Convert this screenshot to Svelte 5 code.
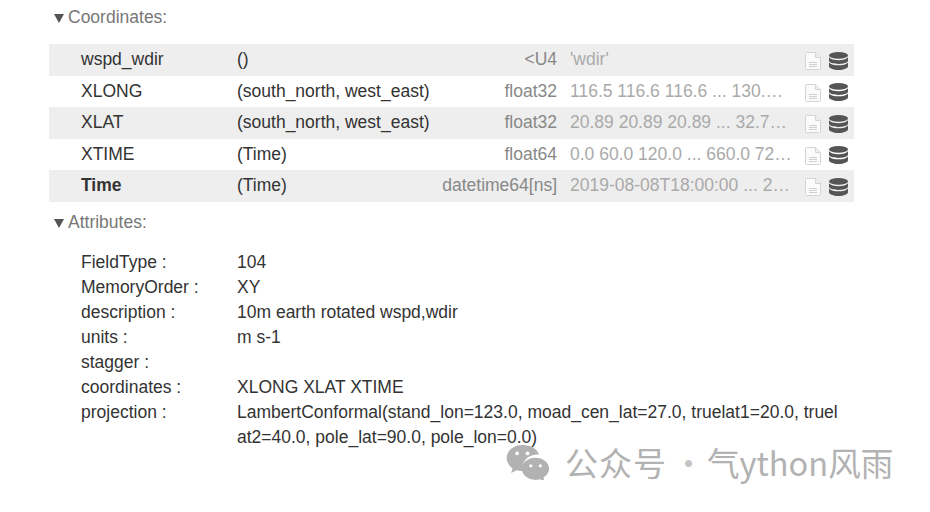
<script>
  const coords = [
    { name: 'wspd_wdir', dims: '()', dtype: '<U4', preview: "'wdir'" },
    { name: 'XLONG', dims: '(south_north, west_east)', dtype: 'float32', preview: '116.5 116.6 116.6 ... 130.6 130.6 130.7' },
    { name: 'XLAT', dims: '(south_north, west_east)', dtype: 'float32', preview: '20.89 20.89 20.89 ... 32.78 32.78 32.78' },
    { name: 'XTIME', dims: '(Time)', dtype: 'float64', preview: '0.0 60.0 120.0 ... 660.0 720.0 780.0' },
    { name: 'Time', dims: '(Time)', dtype: 'datetime64[ns]', preview: '2019-08-08T18:00:00 ... 2019-08-09', bold: true }
  ];

  const attrs = [
    ['FieldType :', '104'],
    ['MemoryOrder :', 'XY'],
    ['description :', '10m earth rotated wspd,wdir'],
    ['units :', 'm s-1'],
    ['stagger :', ''],
    ['coordinates :', 'XLONG XLAT XTIME'],
    ['projection :', 'LambertConformal(stand_lon=123.0, moad_cen_lat=27.0, truelat1=20.0, truelat2=40.0, pole_lat=90.0, pole_lon=0.0)']
  ];
</script>

<div class="page">
  <div class="section-title first"><span class="arrow"></span>Coordinates:</div>

  <ul class="vars">
    {#each coords as c}
      <li class="var">
        <div class="name" class:bold={c.bold}>{c.name}</div>
        <div class="dims">{c.dims}</div>
        <div class="dtype">{c.dtype}</div>
        <div class="preview">{c.preview}</div>
        <svg class="file" viewBox="0 0 16 18" width="16" height="18" aria-hidden="true">
          <path d="M1.500 .5h9l5 5v11a1 1 0 0 1-1 1h-13a1 1 0 0 1-1-1v-15a1 1 0 0 1 1-1z" fill="#fbfbfb" stroke="#d4d4d4" />
          <path d="M10.500 .5v5h5" fill="#eee" stroke="#d4d4d4" />
          <path d="M4 10.500h8M4 12.500h8M4 14.500h8" stroke="#d0d0d0" />
        </svg>
        <svg class="db" viewBox="0 0 19 18" width="19" height="18" aria-hidden="true">
          <ellipse cx="9.500" cy="3.400" rx="9.500" ry="3.400" fill="#555" />
          <path d="M0 5.300c1.500 2 5.200 2.900 9.500 2.900s8-.9 9.500-2.900v3.300c0 2-4.200 3.400-9.500 3.400s-9.500-1.400-9.500-3.400z" fill="#555" />
          <path d="M0 10.400c1.500 2 5.200 2.900 9.500 2.900s8-.9 9.500-2.900v3.900c0 2-4.200 3.700-9.500 3.700s-9.500-1.700-9.500-3.700z" fill="#555" />
        </svg>
      </li>
    {/each}
  </ul>

  <div class="section-title second"><span class="arrow"></span>Attributes:</div>

  <dl class="attrs">
    {#each attrs as [k, v]}
      <dt>{k}</dt>
      <dd>{v}</dd>
    {/each}
  </dl>

  <div class="mark">
    <svg viewBox="0 0 46 38" width="46" height="36" aria-hidden="true">
      <path d="M17 1c-9 0-16.500 6-16.500 13.800 0 4.400 2.400 8.200 6.200 10.800l-1.500 5 5.800-3c1.900.5 3.800.8 6 .8h1.200c-.5-1.400-.7-2.800-.7-4.200 0-7.500 7-13.200 15.800-13.200h1.300c-1.700-6-8.800-10-17.600-10z" fill="#b2b2b2" />
      <path d="M31 14.500c-8 0-14.500 5.200-14.500 11.700s6.500 11.700 14.500 11.700c1.700 0 3.300-.3 4.900-.7l4.600 2.500-1.200-4.200c3.500-2.200 6-5.500 6-9.300 0-6.500-6.200-11.700-14.300-11.700z" fill="#b2b2b2" />
      <circle cx="11.500" cy="10" r="2" fill="#fff" />
      <circle cx="22.500" cy="10" r="2" fill="#fff" />
      <circle cx="26" cy="23" r="1.700" fill="#fff" />
      <circle cx="36" cy="23" r="1.700" fill="#fff" />
    </svg>
    <span><span class="wide">公众号</span><span class="dot">·</span><span class="tail">气ython风雨</span></span>
  </div>
</div>

<style>
  :global(body) {
    margin: 0;
    background: #fff;
  }
  .page {
    position: relative;
    width: 930px;
    height: 512px;
    overflow: hidden;
    box-sizing: border-box;
    padding-left: 49px;
    font-family: "Liberation Sans", Arial, sans-serif;
    font-size: 17.5px;
    color: #333;
  }
  .section-title {
    display: flex;
    align-items: center;
    height: 40px;
    margin-left: 5px;
    color: #777;
  }
  .section-title.first {
    height: 34px;
    margin-bottom: 10px;
  }
  .section-title.second {
    box-sizing: border-box;
    padding-top: 2px;
  }
  .arrow {
    width: 0;
    height: 0;
    margin-right: 4px;
    margin-top: 2px;
    border-left: 5px solid transparent;
    border-right: 5px solid transparent;
    border-top: 9px solid #555;
  }
  .vars {
    list-style: none;
    margin: 0;
    padding: 0;
    width: 805px;
  }
  .var {
    display: grid;
    grid-template-columns: 156px 200px 120px 248px 16px 27px;
    align-items: center;
    height: 31.500px;
    padding-left: 32px;
    box-sizing: border-box;
  }
  .var:nth-child(odd) {
    background: #eee;
  }
  .name.bold {
    font-weight: bold;
  }
  .dims {
    white-space: nowrap;
  }
  .dtype {
    text-align: right;
    color: #888;
    white-space: nowrap;
  }
  .preview {
    color: #aaa;
    margin: 0 13px;
    white-space: nowrap;
    overflow: hidden;
    text-overflow: ellipsis;
  }
  .file {
    margin-top: 3px;
  }
  .db {
    margin-left: 8px;
    margin-top: 2px;
  }
  .attrs {
    display: grid;
    grid-template-columns: 156px 602px;
    margin: 0;
    padding: 8px 0 0 32px;
    line-height: 25px;
  }
  dd {
    margin: 0;
    min-height: 25px;
    word-break: break-all;
  }
  .mark {
    position: absolute;
    left: 505px;
    top: 440px;
    display: flex;
    align-items: center;
    gap: 14px;
    color: #b2b2b2;
    font-family: "Noto Sans CJK SC", "Noto Sans", sans-serif;
    font-size: 33px;
    line-height: 44px;
    white-space: nowrap;
  }
  .wide {
    letter-spacing: 1px;
  }
  .dot {
    margin: 0 2px 0 5px;
    color: #c4c4c4;
  }
  .tail {
    font-size: 32.600px;
  }
</style>
